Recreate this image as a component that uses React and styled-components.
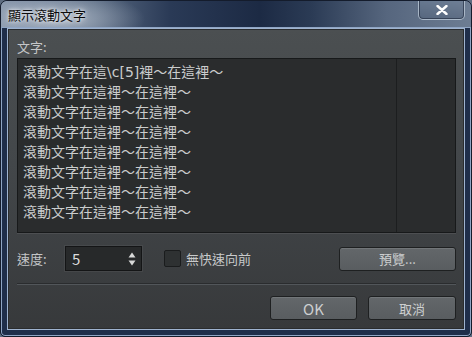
import React from 'react'
import styled, { createGlobalStyle } from 'styled-components'

const GlobalStyle = createGlobalStyle`
  html, body {
    margin: 0;
    padding: 0;
    background: #5d6c80;
  }
  * { box-sizing: border-box; }
`

const FONT = `"Noto Sans CJK TC", "Noto Sans", "Liberation Sans", sans-serif`

const lines = [
  '滾動文字在這\\c[5]裡～在這裡～',
  '滾動文字在這裡～在這裡～',
  '滾動文字在這裡～在這裡～',
  '滾動文字在這裡～在這裡～',
  '滾動文字在這裡～在這裡～',
  '滾動文字在這裡～在這裡～',
  '滾動文字在這裡～在這裡～',
  '滾動文字在這裡～在這裡～',
]

function App() {
  return (
    <>
      <GlobalStyle />
      <Window>
        <TitleBar>
          <Title>顯示滾動文字</Title>
          <CloseButton>
            <svg width="12" height="10" viewBox="0 0 12 10">
              <path d="M1.5 1 L10.5 9 M10.5 1 L1.5 9" stroke="#fff" strokeWidth="2.4" strokeLinecap="round" />
            </svg>
          </CloseButton>
        </TitleBar>
        <Client>
          <FieldLabel>文字:</FieldLabel>
          <TextBox>
            <TextLines>
              {lines.map((l, i) => (
                <Line key={i}>{l}</Line>
              ))}
            </TextLines>
            <Gutter />
          </TextBox>
          <OptionRow>
            <FieldLabel>速度:</FieldLabel>
            <SpinBox>
              <SpinValue>5</SpinValue>
              <Arrows>
                <svg width="8" height="6" viewBox="0 0 8 6"><path d="M4 0.5 L7.5 5.5 L0.5 5.5 Z" fill="#d8d8d8" /></svg>
                <svg width="8" height="6" viewBox="0 0 8 6"><path d="M0.5 0.5 L7.5 0.5 L4 5.5 Z" fill="#d8d8d8" /></svg>
              </Arrows>
            </SpinBox>
            <Check>
              <Box />
              <CheckText>無快速向前</CheckText>
            </Check>
            <Spacer />
            <Button $w={117}>預覽...</Button>
          </OptionRow>
          <Separator />
          <ButtonRow>
            <Button $w={87} $big>OK</Button>
            <Button $w={88}>取消</Button>
          </ButtonRow>
        </Client>
      </Window>
    </>
  )
}

export default App

const Window = styled.div`
  width: 472px;
  height: 337px;
  display: flex;
  flex-direction: column;
  background: #1f2e4a;
  border: 1px solid #141c2c;
  border-radius: 7px 7px 5px 5px;
  box-shadow: inset 0 0 0 1px #8fa5c4;
  overflow: hidden;
  font-family: ${FONT};
`

const TitleBar = styled.div`
  height: 27px;
  display: flex;
  align-items: flex-start;
  justify-content: space-between;
  padding: 0 6px 0 7px;
  background:
    radial-gradient(ellipse 120px 40px at 60px 18px, rgba(190, 200, 212, 0.75), rgba(190, 200, 212, 0) 70%),
    linear-gradient(90deg, #8796ab 0%, #596a82 20%, #2a3a56 36%, #1c2a44 55%, #2b3b55 66%, #56667e 82%, #6d7d93 100%);
  border-bottom: 1px solid #8fa5c4;
`

const Title = styled.div`
  margin-top: 6px;
  font-size: 13px;
  line-height: 16px;
  color: #0c0c0c;
  text-shadow: 0 0 6px rgba(255, 255, 255, 0.9), 0 0 3px rgba(255, 255, 255, 0.8);
`

const CloseButton = styled.div`
  width: 47px;
  height: 20px;
  margin-top: -1px;
  display: flex;
  align-items: center;
  justify-content: center;
  border: 1px solid rgba(200, 212, 226, 0.7);
  border-top: none;
  border-radius: 0 0 5px 5px;
  background: linear-gradient(180deg, rgba(120, 138, 162, 0.35), rgba(70, 86, 110, 0.35));
  box-shadow: inset 0 0 0 1px rgba(30, 40, 60, 0.6);
`

const Client = styled.div`
  flex: 1;
  margin: 0 6px 6px 6px;
  display: flex;
  flex-direction: column;
  padding: 10px 8px 0 9px;
  border: 1px solid #9fb3cf;
  box-shadow: inset 0 0 0 1px #2a2c2e;
  background: linear-gradient(180deg, #4b4f51 0%, #43474a 45%, #37393b 100%);
`

const FieldLabel = styled.div`
  font-size: 13px;
  line-height: 16px;
  color: #c4c6c8;
  margin-bottom: 3px;
`

const TextBox = styled.div`
  height: 175px;
  display: flex;
  background: #2a2c2d;
  border: 1px solid #17191a;
  box-shadow: 0 1px 0 rgba(255, 255, 255, 0.08);
`

const TextLines = styled.div`
  flex: 1;
  padding: 3px 0 0 5px;
`

const Line = styled.div`
  font-family: "DejaVu Sans", "Noto Sans CJK TC", sans-serif;
  font-size: 14px;
  line-height: 20px;
  color: #cbcdcd;
  white-space: nowrap;
`

const Gutter = styled.div`
  width: 59px;
  border-left: 1px solid #1c1e1f;
`

const OptionRow = styled.div`
  margin-top: 13px;
  height: 25px;
  display: flex;
  align-items: center;

  ${FieldLabel} {
    margin: 0;
    width: 48px;
  }
`

const SpinBox = styled.div`
  width: 77px;
  height: 25px;
  display: flex;
  align-items: center;
  justify-content: space-between;
  padding: 0 5px 0 6px;
  background: #27292a;
  border: 1px solid #141516;
  box-shadow: 0 0 0 1px rgba(255, 255, 255, 0.05);
`

const SpinValue = styled.span`
  font-size: 15px;
  color: #dcdcdc;
`

const Arrows = styled.div`
  display: flex;
  flex-direction: column;
  gap: 2px;
  svg { display: block; }
`

const Check = styled.div`
  margin-left: 22px;
  display: flex;
  align-items: center;
  gap: 5px;
`

const Box = styled.div`
  width: 17px;
  height: 17px;
  border-radius: 2px;
  background: #2e3132;
  border: 1px solid #1a1c1d;
`

const CheckText = styled.span`
  font-size: 13px;
  color: #c8cacb;
`

const Spacer = styled.div`
  flex: 1;
`

const Button = styled.div`
  width: ${p => p.$w}px;
  height: 24px;
  display: flex;
  align-items: center;
  justify-content: center;
  font-size: ${p => (p.$big ? 15 : 13)}px;
  color: #cdcfd0;
  background: linear-gradient(180deg, #63676a 0%, #595d60 100%);
  border: 1px solid #1e2021;
  border-radius: 3px;
  box-shadow: inset 0 1px 0 rgba(255, 255, 255, 0.1);
`

const Separator = styled.div`
  margin-top: 12px;
  height: 2px;
  border-top: 1px solid #2a2c2e;
  border-bottom: 1px solid #52565a;
`

const ButtonRow = styled.div`
  margin-top: 11px;
  display: flex;
  justify-content: flex-end;
  gap: 11px;
`
